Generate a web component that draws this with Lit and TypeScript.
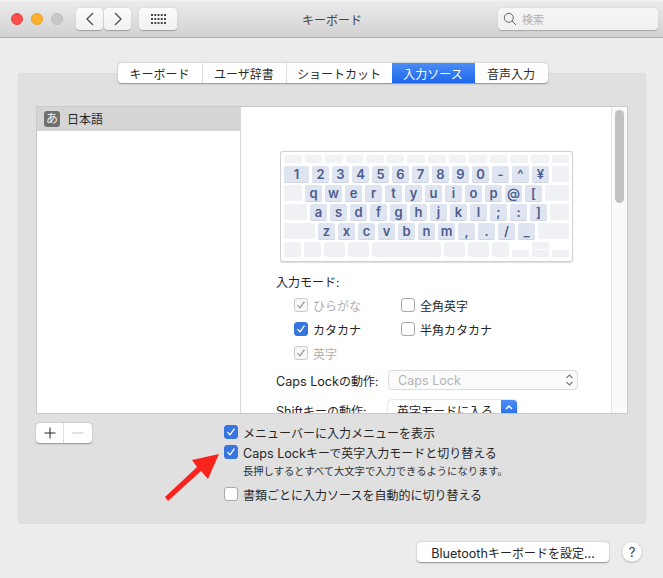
import { LitElement, html, css, svg } from "lit";
import { customElement } from "lit/decorators.js";

const tabs = [
  { t: "キーボード", w: 84 },
  { t: "ユーザ辞書", w: 84 },
  { t: "ショートカット", w: 106 },
  { t: "入力ソース", w: 83, on: true },
  { t: "音声入力", w: 73 },
];

type K = [string, number];
const lets = (s: string[]): K[] => s.map((c) => [c, 17] as K);
const rows: { h: number; keys: K[] }[] = [
  { h: 8, keys: Array.from({ length: 14 }, () => ["", 18] as K) },
  { h: 16, keys: [["1", 25], ...lets("234567890-^¥".split("")), ["", 17]] },
  { h: 16, keys: [["", 18], ...lets("qwertyuiop@[".split("")), ["", 24]] },
  { h: 16, keys: [["", 23], ...lets("asdfghjkl;:]".split("")), ["", 19]] },
  { h: 16, keys: [["", 31], ...lets("zxcvbnm,./_".split("")), ["", 31]] },
];
const bottom = [17, 17, 21, 21, 69, 21, 21, 17];

const check = () => html`<svg class="tick" viewBox="0 0 14 14"><path d="M3.200 7.400 5.800 10.400 10.800 3.400" fill="none" stroke="currentColor" stroke-width="1.500" stroke-linecap="round" stroke-linejoin="round"/></svg>`;

@customElement("app-root")
export class AppRoot extends LitElement {
  static styles = css`
    :host { display: block; width: 663px; height: 578px; position: relative; overflow: hidden; background: #ececec; color: #262626;
      font: 12px Inter, "Noto Sans CJK JP", sans-serif; }
    * { box-sizing: border-box; }
    .lat { font-size: 12.600px; }
    .titlebar { height: 38px; display: grid; grid-template-columns: 1fr auto 1fr; align-items: center; padding: 0 5px;
      background: linear-gradient(#ebebeb, #d2d2d2); border-bottom: 1px solid #aeaeae; border-top: 1px solid #f2f2f2; }
    .tl { display: flex; align-items: center; margin-left: 6px; }
    .light { width: 12px; height: 12px; border-radius: 50%; margin-right: 8px; }
    .red { background: #fc4e4a; border: 1px solid #e5413c; }
    .yellow { background: #fdb22d; border: 1px solid #e3a023; }
    .gray { background: #c8c8c8; border: 1px solid #bcbcbc; }
    .tb { height: 22px; background: linear-gradient(#fbfbfb, #f1f1f1); border-radius: 4px; box-shadow: 0 .5px 1px #9d9d9d; display: flex; align-items: center; justify-content: center; color: #4c4c4c; }
    .nav { width: 27px; margin-right: 1px; }
    .back { margin-left: 5px; }
    .grid { width: 38px; margin-left: 7px; }
    .title { font-size: 12px; color: #444; padding-left: 1px; }
    .search { justify-self: end; width: 160px; height: 22px; background: linear-gradient(#f6f6f6,#f0f0f0); border-radius: 4px; box-shadow: 0 .5px 1px #a5a5a5; display: flex; align-items: center; gap: 5px; padding-left: 5px; color: #b0b0b0; font-size: 11px; }
    .group { margin: 35px 17px 0 18px; height: 451px; background: #e0e0e0; border-radius: 4px; box-shadow: inset 0 0 0 1px #dcdcdc; display: flex; flex-direction: column; }
    .tabs { display: flex; align-self: center; margin: -10px 0 0 1px; height: 20px; background: #fff; border-radius: 4px; box-shadow: 0 .5px 1.500px #8f8f8f; }
    .tab { display: flex; align-items: center; justify-content: center; border-left: 1px solid #dcdcdc; font-size: 12px; color: #2a2a2a; }
    .tab:first-child { border-left: 0; }
    .tab.on { background: linear-gradient(#4c8df6, #1c67ea); color: #fff; border-left: 0; }
    .tab.on + .tab { border-left: 0; }
    .list { margin: 23px 18px 0 18px; height: 308px; display: flex; background: #fff; border: 1px solid #c9c9c9; overflow: hidden; }
    .left { width: 204px; border-right: 1px solid #dadada; flex: none; }
    .row0 { height: 24px; background: #d5d5d5; display: flex; align-items: center; gap: 7px; padding: 0 0 1px 7px; }
    .badge { width: 16px; height: 16px; background: #6f6f6f; color: #f0f0f0; border-radius: 3px; font-size: 12px; line-height: 15px; text-align: center; }
    .pane { flex: 1; min-width: 0; height: 100%; overflow: hidden; padding: 44px 0 0 35px; }
    .bar { width: 16px; flex: none; border-left: 1px solid #e6e6e6; background: #fafafa; padding: 3px 0 0 3px; }
    .thumb { width: 9px; height: 93px; background: #c2c2c2; border-radius: 5px; }
    .kbd { margin-left: 4px; width: 293px; height: 111px; border: 1px solid #cfd1d5; border-radius: 3px; background: #fff; padding: 3px; display: flex; flex-direction: column; gap: 3px; box-shadow: 0 .5px 1px #ddd; }
    .krow { display: flex; gap: 3px; }
    .key { background: #eff1f5; border-radius: 2px; display: flex; align-items: center; justify-content: center; font: 600 13px/1 Inter, sans-serif; color: #4d5c8c; }
    .key.f { background: #f1f2f5; }
    .key.l { background: #dfe5f0; box-shadow: 0 1px 0 #cfd5e2; }
    .arrows { display: flex; gap: 3px; align-items: flex-end; height: 15px; }
    .akey { display: block; width: 17px; height: 7px; background: #eff1f5; border-radius: 1px; }
    .aup { display: flex; flex-direction: column; gap: 1px; }
    .form { margin-top: 13px; }
    .cap { height: 16px; line-height: 16px; }
    .modes { display: grid; grid-template-columns: 107px auto; justify-content: start; margin: 2px 0 0 18px; grid-auto-rows: 24px; align-items: center; }
    .ck { display: flex; align-items: center; gap: 5px; white-space: nowrap; }
    .cb { width: 14px; height: 14px; flex: none; border-radius: 3px; background: #fff; border: 1px solid #a9a9a9; display: flex; color: #fff; }
    .cb.on { background: #3874de; border-color: #3874de; }
    .cb.dis { background: #f8f8f8; border-color: #c9c9c9; color: #9a9a9a; }
    .dim { color: #aeaeae; }
    .tick { width: 12px; height: 12px; }
    .sel-row { display: flex; align-items: center; height: 20px; }
    .sel-row.one { margin-top: 5px; }
    .sel-row.two { margin-top: 10px; }
    .sel-label { width: 112px; flex: none; white-space: nowrap; }
    .select { height: 20px; border-radius: 4px; flex: none; display: flex; align-items: center; padding-left: 9px; position: relative; white-space: nowrap; }
    .sel1 { width: 190px; background: #fbfbfb; border: 1px solid #dcdcdc; color: #b4b4b4; justify-content: space-between; padding-right: 3px; }
    .sel2 { width: 129px; background: #fff; box-shadow: 0 .5px 1.500px #999; overflow: hidden; }
    .stepper { position: absolute; right: 0; top: 0; bottom: 0; width: 16px; background: linear-gradient(#4c8df6, #1c67ea); color: #fff; display: flex; justify-content: center; padding-top: 4px; }
    .under { display: flex; padding: 9px 0 0 18px; }
    .addrem { width: 56px; height: 20px; background: #fff; border-radius: 4px; box-shadow: 0 .5px 1.500px #8f8f8f; display: flex; flex: none; }
    .addrem span { display: flex; align-items: center; justify-content: center; }
    .plus { width: 28px; border-right: 1px solid #dcdcdc; color: #222; }
    .minus { flex: 1; color: #c4c4c4; }
    .opts { margin: -1px 0 0 132px; display: flex; flex-direction: column; }
    .opts .ck { height: 20px; }
    .sub { font-size: 10.300px; color: #333; padding-left: 19px; height: 22px; line-height: 18px; white-space: nowrap; }
    .foot { display: flex; justify-content: flex-end; align-items: center; gap: 13px; padding: 18px 21px 0 0; }
    .btn { width: 192px; height: 20px; background: #fff; border-radius: 4px; box-shadow: 0 .5px 1.500px #8f8f8f; display: flex; align-items: center; justify-content: center; }
    .help { width: 20px; height: 20px; background: #fff; border-radius: 50%; box-shadow: 0 .5px 1.500px #8f8f8f; display: flex; align-items: center; justify-content: center; font-size: 13px; color: #333; }
    .arrow { position: absolute; left: 160px; top: 446px; }
  `;

  private cb(state: "on" | "off" | "dis") {
    return html`<span class="cb ${state}">${state === "off" ? "" : check()}</span>`;
  }

  render() {
    const dots = [];
    for (let y = 0; y < 3; y++) for (let x = 0; x < 5; x++) dots.push(svg`<rect x=${x * 3.25} y=${y * 4} width="2" height="2"/>`);
    return html`
      <div class="titlebar">
        <div class="tl">
          <span class="light red"></span><span class="light yellow"></span><span class="light gray"></span>
          <span class="tb nav back"><svg width="10" height="14" viewBox="0 0 10 14"><path d="M8 1 2 7l6 6" fill="none" stroke="currentColor" stroke-width="1.300"/></svg></span>
          <span class="tb nav"><svg width="10" height="14" viewBox="0 0 10 14"><path d="M2 1 8 7l-6 6" fill="none" stroke="currentColor" stroke-width="1.300"/></svg></span>
          <span class="tb grid"><svg width="15" height="10" viewBox="0 0 15 10" fill="#4c4c4c">${dots}</svg></span>
        </div>
        <div class="title">キーボード</div>
        <div class="search">
          <svg width="14" height="14" viewBox="0 0 14 14" fill="none" stroke="#666" stroke-width="1"><circle cx="5.800" cy="5.800" r="4.500"/><path d="m9 9 4 4"/></svg>
          <span>検索</span>
        </div>
      </div>

      <div class="group">
        <div class="tabs">
          ${tabs.map((t) => html`<div class="tab ${t.on ? "on" : ""}" style="width:${t.w}px">${t.t}</div>`)}
        </div>
        <div class="list">
          <div class="left">
            <div class="row0"><span class="badge">あ</span><span>日本語</span></div>
          </div>
          <div class="pane">
            <div class="kbd">
              ${rows.map((r) => html`<div class="krow">
                ${r.keys.map(([c, w]) => html`<span class="key ${c ? "l" : ""} ${r.h === 8 ? "f" : ""}" style="width:${w}px;height:${r.h}px">${c}</span>`)}
              </div>`)}
              <div class="krow">
                ${bottom.map((w) => html`<span class="key" style="width:${w}px;height:15px"></span>`)}
                <span class="arrows">
                  <span class="akey"></span>
                  <span class="aup"><span class="akey"></span><span class="akey"></span></span>
                  <span class="akey"></span>
                </span>
              </div>
            </div>
            <div class="form">
              <div class="cap">入力モード:</div>
              <div class="modes">
                <label class="ck dim">${this.cb("dis")}ひらがな</label>
                <label class="ck">${this.cb("off")}全角英字</label>
                <label class="ck">${this.cb("on")}カタカナ</label>
                <label class="ck">${this.cb("off")}半角カタカナ</label>
                <label class="ck dim">${this.cb("dis")}英字</label>
              </div>
              <div class="sel-row one">
                <span class="sel-label"><span class="lat">Caps Lock</span>の動作:</span>
                <span class="select sel1"><span class="lat">Caps Lock</span>
                  <svg width="9" height="14" viewBox="0 0 9 14" fill="none" stroke="#777" stroke-width="1.100"><path d="m1.500 5 3-3 3 3M1.500 9l3 3 3-3"/></svg>
                </span>
              </div>
              <div class="sel-row two">
                <span class="sel-label"><span class="lat">Shift</span>キーの動作:</span>
                <span class="select sel2">英字モードに入る
                  <span class="stepper"><svg width="10" height="6" viewBox="0 0 10 6" fill="none" stroke="#fff" stroke-width="1.500"><path d="m2 5 3-3 3 3"/></svg></span>
                </span>
              </div>
            </div>
          </div>
          <div class="bar"><div class="thumb"></div></div>
        </div>
        <div class="under">
          <div class="addrem">
            <span class="plus"><svg width="12" height="12" viewBox="0 0 12 12" stroke="currentColor" stroke-width="1"><path d="M6 .5v11M.5 6h11"/></svg></span>
            <span class="minus"><svg width="12" height="12" viewBox="0 0 12 12" stroke="currentColor" stroke-width="1"><path d="M.5 6h11"/></svg></span>
          </div>
          <div class="opts">
            <label class="ck">${this.cb("on")}メニューバーに入力メニューを表示</label>
            <label class="ck">${this.cb("on")}<span><span class="lat">Caps Lock</span>キーで英字入力モードと切り替える</span></label>
            <div class="sub">長押しするとすべて大文字で入力できるようになります。</div>
            <label class="ck">${this.cb("off")}書類ごとに入力ソースを自動的に切り替える</label>
          </div>
        </div>
      </div>

      <div class="foot">
        <div class="btn"><span><span class="lat">Bluetooth</span>キーボードを設定<span class="lat">...</span></span></div>
        <div class="help">?</div>
      </div>

      <svg class="arrow" width="64" height="56" viewBox="0 0 64 56"><path d="M5 51 8 55 41 25 48 33 59 8 32 14 37 21Z" fill="#f8231c"/></svg>
    `;
  }
}
